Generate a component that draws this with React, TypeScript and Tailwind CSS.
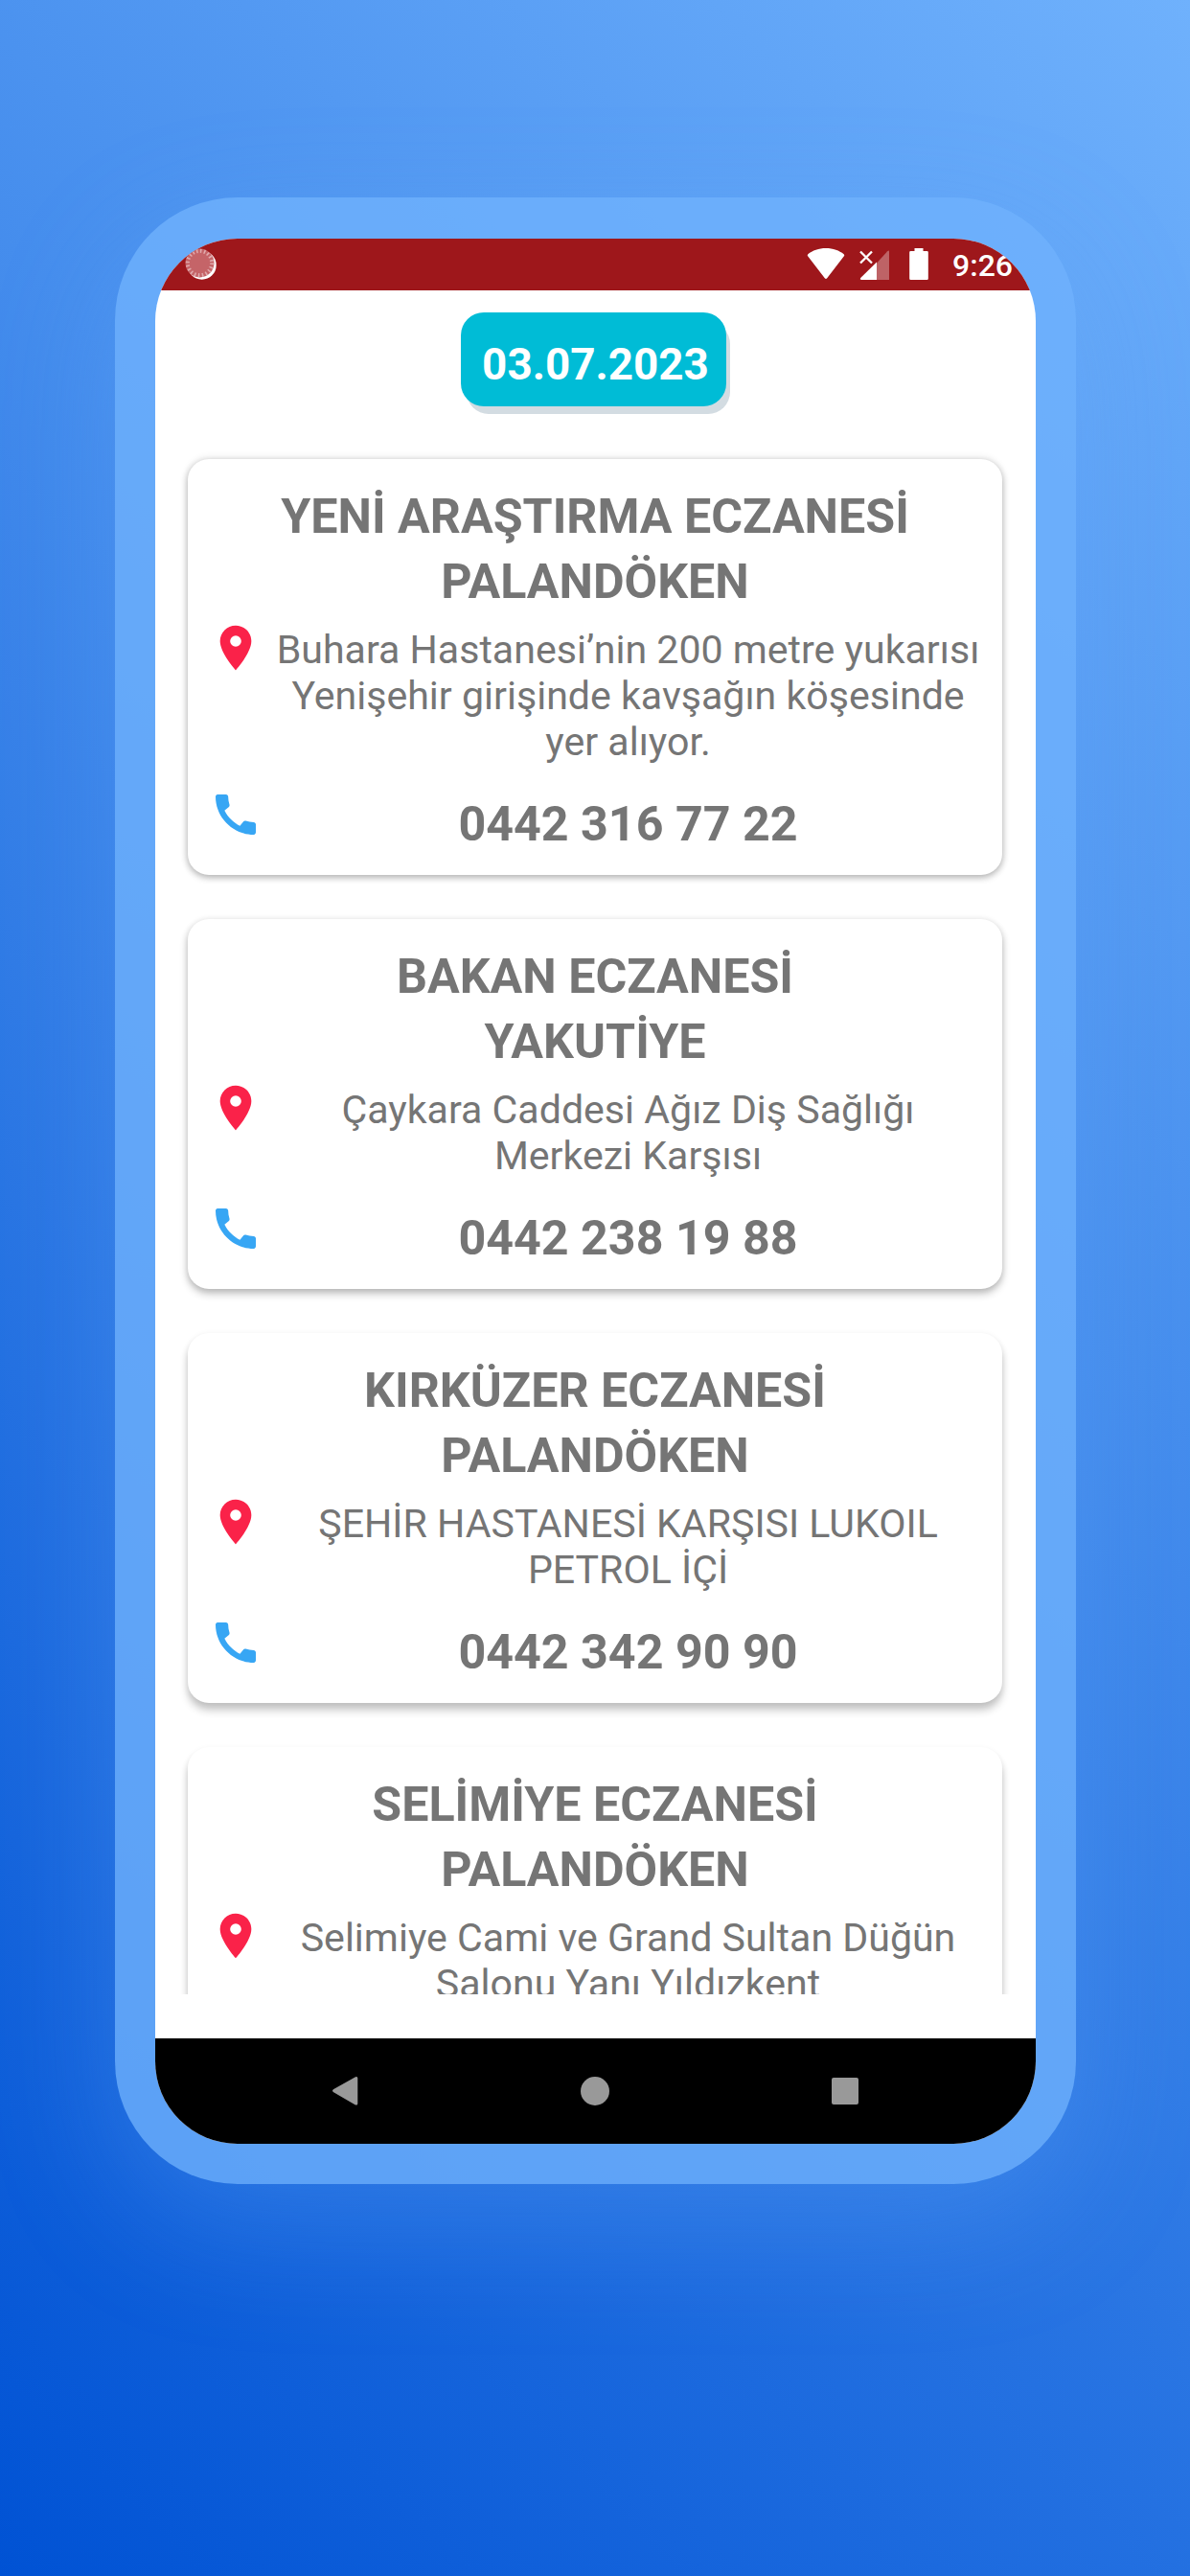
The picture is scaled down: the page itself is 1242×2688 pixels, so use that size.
import React from 'react';

interface Pharmacy {
    name: string;
    district: string;
    address: string[];
    phone: string;
    shadow: string;
}

const pharmacies: Pharmacy[] = [
    {
        name: 'YENİ ARAŞTIRMA ECZANESİ',
        district: 'PALANDÖKEN',
        address: ['Buhara Hastanesi’nin 200 metre yukarısı', 'Yenişehir girişinde kavşağın köşesinde', 'yer alıyor.'],
        phone: '0442 316 77 22',
        shadow: 'shadow-[0_3px_7px_rgba(0,0,0,0.24),0_0_8px_rgba(0,0,0,0.14)]',
    },
    {
        name: 'BAKAN ECZANESİ',
        district: 'YAKUTİYE',
        address: ['Çaykara Caddesi Ağız Diş Sağlığı', 'Merkezi Karşısı'],
        phone: '0442 238 19 88',
        shadow: 'shadow-[0_5px_8px_rgba(0,0,0,0.24),0_1px_7px_rgba(0,0,0,0.11)]',
    },
    {
        name: 'KIRKÜZER ECZANESİ',
        district: 'PALANDÖKEN',
        address: ['ŞEHİR HASTANESİ KARŞISI LUKOIL', 'PETROL İÇİ'],
        phone: '0442 342 90 90',
        shadow: 'shadow-[0_8px_8px_rgba(0,0,0,0.2),0_2px_7px_rgba(0,0,0,0.09)]',
    },
    {
        name: 'SELİMİYE ECZANESİ',
        district: 'PALANDÖKEN',
        address: ['Selimiye Cami ve Grand Sultan Düğün', 'Salonu Yanı Yıldızkent'],
        phone: '',
        shadow: 'shadow-[0_9px_8px_rgba(0,0,0,0.2),0_3px_7px_rgba(0,0,0,0.09)]',
    },
];

const PinIcon = () => (
    <svg viewBox="0 0 24 24" className="w-[56px] h-[56px]" fill="#fa2249">
        <path d="M12 2C8.13 2 5 5.13 5 9c0 5.25 7 13 7 13s7-7.75 7-13c0-3.87-3.13-7-7-7zm0 9.5a2.5 2.5 0 0 1 0-5 2.5 2.5 0 0 1 0 5z" />
    </svg>
);

const PhoneIcon = () => (
    <svg viewBox="0 0 24 24" className="w-[56px] h-[56px]" fill="#37a6f4">
        <path d="M20.01 15.38c-1.23 0-2.42-.2-3.53-.56-.35-.12-.74-.03-1.01.24l-1.57 1.97c-2.83-1.35-5.48-3.9-6.89-6.83l1.95-1.66c.27-.28.35-.67.24-1.02-.37-1.11-.56-2.3-.56-3.53 0-.54-.45-.99-.99-.99H4.19C3.65 3 3 3.24 3 3.99 3 13.28 10.73 21 20.01 21c.71 0 .99-.63.99-1.18v-3.45c0-.54-.45-.99-.99-.99z" />
    </svg>
);

function StatusBar() {
    return (
        <div className="h-[54px] shrink-0 bg-[#9e171b] flex items-start pl-[31px] pr-[24px]">
            <svg viewBox="0 0 34 34" className="w-[34px] h-[34px] mt-[10px]">
                <circle cx="17.7" cy="17.7" r="15" fill="#fff" />
                <circle cx="15.5" cy="15.5" r="15" fill="#c56468" />
                <circle cx="15.5" cy="15.5" r="12.7" fill="none" stroke="#e0abad" strokeWidth="4" strokeDasharray="1.6 2.39" />
            </svg>
            <svg viewBox="0 0 40 34" className="w-[40px] h-[34px] mt-[9px] ml-auto" fill="#fff">
                <path d="M20 1C12.500 1 6 3.500 1.300 7.200a1.500 1.500 0 0 0-.2 2.100L18.800 32.300a1.500 1.500 0 0 0 2.400 0L38.900 9.300a1.500 1.500 0 0 0-.2-2.100C34 3.500 27.500 1 20 1z" />
            </svg>
            <svg viewBox="0 0 32 32" className="w-[32px] h-[32px] mt-[12px] ml-[15px]">
                <path d="M18 13.500 29.200 1.200q1.800-1.600 1.800.8V31H18z" fill="#fff" fillOpacity="0.33" />
                <path d="M18 12.500V31H1.800q-1.800-.4-.6-1.900z" fill="#fff" />
                <path d="M1 1.500 13 13.500M13 1.500 1 13.500" stroke="#fff" strokeWidth="2.300" />
            </svg>
            <svg viewBox="0 0 20 34" className="w-[20px] h-[34px] mt-[10px] ml-[20px]" fill="#fff">
                <path d="M5.500 0h9v3H18.500q1.300 0 1.300 1.300V31.700q0 1.300-1.300 1.300H1.500Q.2 33 .2 31.700V4.300Q.2 3 1.500 3h4z" />
            </svg>
            <span className="ml-[25px] mt-[9px] text-[32px] leading-[38px] font-medium text-white">9:26</span>
        </div>
    );
}

function PharmacyCard({ item }: { item: Pharmacy }) {
    return (
        <div className={`shrink-0 rounded-[22px] bg-white pt-[26px] pb-[21px] ${item.shadow}`}>
            <h2 className="text-center text-[50.2px] leading-[67.5px] font-bold">
                <span className="block">{item.name}</span>
                <span className="block">{item.district}</span>
            </h2>
            <div className="flex mt-[8px]">
                <div className="ml-[22px] shrink-0">
                    <PinIcon />
                </div>
                <p className="flex-1 ml-[4px] mr-[13px] mt-[6px] text-center text-[41.1px] leading-[48px] whitespace-nowrap">
                    {item.address.map((line) => (
                        <span key={line} className="block">{line}</span>
                    ))}
                </p>
            </div>
            <div className="flex mt-[24px] h-[70px]">
                <div className="ml-[22px] shrink-0">
                    <PhoneIcon />
                </div>
                <p className="flex-1 ml-[4px] mr-[13px] mt-[9px] text-center text-[50.2px] leading-[58px] font-bold">{item.phone}</p>
            </div>
        </div>
    );
}

export default function App() {
    return (
        <div className="w-[1242px] h-[2688px] overflow-hidden bg-[linear-gradient(45deg,#0052d4_0%,#6fb1fc_100%)] pt-[206px] pl-[120px] font-[Roboto,sans-serif]">
            <div className="w-[1003px] h-[2073px] rounded-[128px] p-[42px] pt-[43px] bg-[#6fb1fc]/80 shadow-[0_42px_130px_rgba(111,177,252,0.28)]">
                <div className="flex flex-col w-[919px] h-[1988px] rounded-[86px] overflow-hidden bg-white text-[#757575]">
                    <StatusBar />

                    {/* Duty date */}
                    <div className="flex justify-center pt-[23px] shrink-0">
                        <div className="w-[277px] h-[98px] mr-[5px] rounded-[24px] bg-[#00bcd6] shadow-[5px_9px_0_-1px_#d3dce2] text-white text-center text-[45.8px] leading-[54px] font-bold pt-[28px] pl-[5px]">
                            03.07.2023
                        </div>
                    </div>

                    {/* Pharmacy list */}
                    <div className="flex flex-col gap-[46px] h-[1650px] mt-[7px] pt-[48px] pl-[34px] pr-[35px] overflow-hidden">
                        {pharmacies.map((item) => (
                            <PharmacyCard key={item.name} item={item} />
                        ))}
                    </div>

                    {/* Navigation bar */}
                    <div className="mt-auto h-[110px] shrink-0 bg-black flex items-center justify-between pl-[184px] pr-[185px]">
                        <svg viewBox="0 0 28 32" className="w-[28px] h-[32px]" fill="#999">
                            <path d="M25 1.200 1.800 14.300q-1.800 1.400 0 2.800L25 30.400q2.300.8 2.300-1.400V2.600q0-2.200-2.300-1.400z" />
                        </svg>
                        <div className="size-[30px] rounded-full bg-[#999]" />
                        <div className="size-[28px] rounded-[2px] bg-[#999]" />
                    </div>
                </div>
            </div>
        </div>
    );
}
